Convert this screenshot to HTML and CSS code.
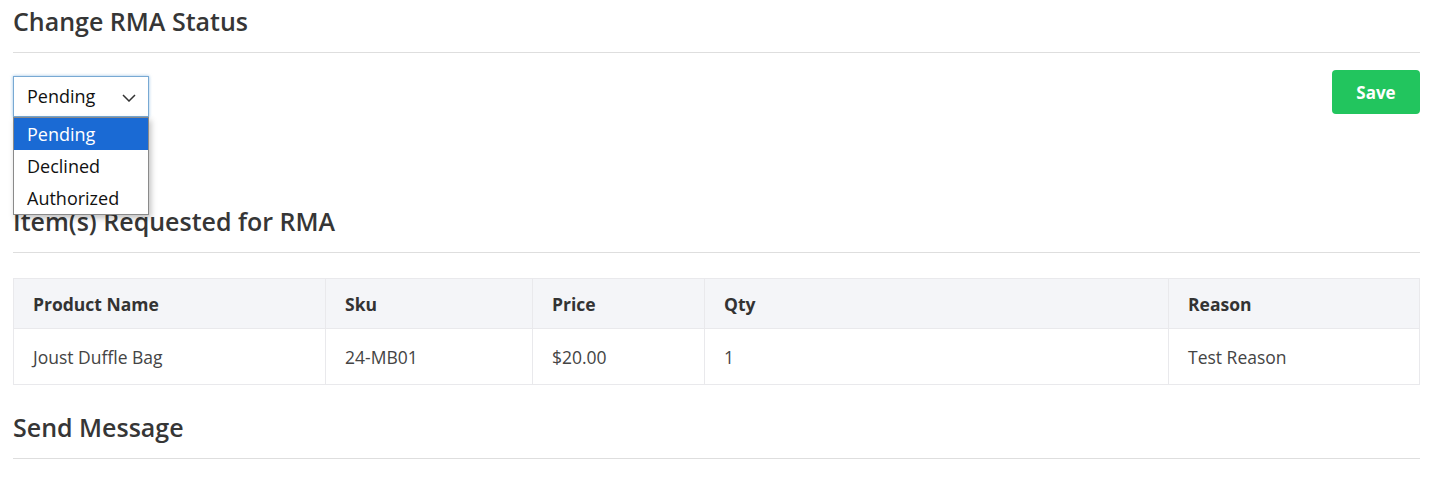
FILE: index.html
```html
<!DOCTYPE html>
<html lang="en">
<head>
    <meta charset="UTF-8">
    <meta name="viewport" content="width=device-width, initial-scale=1.0">
    <title>RMA Details</title>
    <link rel="stylesheet" href="styles.css">
</head>
<body>
    <div class="page">
        <h2 class="section-title">Change RMA Status</h2>

        <div class="status-row">
            <div class="status-select">
                <div class="select-box">
                    <span>Pending</span>
                    <svg class="chevron" width="14" height="8" viewBox="0 0 14 8">
                        <path d="M1 1 L7 7 L13 1" fill="none" stroke="#333" stroke-width="1.5"/>
                    </svg>
                </div>
                <ul class="select-options">
                    <li class="selected">Pending</li>
                    <li>Declined</li>
                    <li>Authorized</li>
                </ul>
            </div>
            <button class="save-btn">Save</button>
        </div>

        <h2 class="section-title items-title">Item(s) Requested for RMA</h2>

        <table class="items-table">
            <colgroup>
                <col style="width: 312px">
                <col style="width: 207px">
                <col style="width: 172px">
                <col style="width: 464px">
                <col>
            </colgroup>
            <thead>
                <tr>
                    <th>Product Name</th>
                    <th>Sku</th>
                    <th>Price</th>
                    <th>Qty</th>
                    <th>Reason</th>
                </tr>
            </thead>
            <tbody>
                <tr>
                    <td>Joust Duffle Bag</td>
                    <td>24-MB01</td>
                    <td>$20.00</td>
                    <td>1</td>
                    <td>Test Reason</td>
                </tr>
            </tbody>
        </table>

        <h2 class="section-title message-title">Send Message</h2>
    </div>
</body>
</html>
```

FILE: styles.css
```css
body {
    margin: 0;
    font-family: "Open Sans", "Noto Sans", sans-serif;
    color: #333;
    background: #fff;
}

.page {
    padding: 6px 10px 0 13px;
}

.section-title {
    margin: 0;
    font-size: 25px;
    font-weight: 600;
    line-height: 30px;
    padding-bottom: 16px;
    border-bottom: 1px solid #dedede;
    color: #363636;
}

/* status row */
.status-row {
    display: flex;
    justify-content: space-between;
    align-items: flex-start;
    margin-top: 17px;
}

.status-select {
    position: relative;
    margin-top: 6px;
}

.select-box {
    display: flex;
    align-items: center;
    justify-content: space-between;
    box-sizing: border-box;
    width: 136px;
    height: 41px;
    padding: 0 12px 0 13px;
    border: 1px solid #78a9d3;
    box-shadow: 0 0 3px rgba(80, 150, 210, 0.6);
    font-size: 18px;
    color: #111;
}

.select-box span {
    margin-top: -2px;
}

.chevron {
    margin-top: 3px;
}

.select-options {
    position: absolute;
    top: 41px;
    left: 0;
    width: 136px;
    box-sizing: border-box;
    margin: 0;
    padding: 0;
    list-style: none;
    background: #fff;
    border: 1px solid #8a8a8a;
    box-shadow: 2px 3px 6px rgba(0, 0, 0, 0.25);
    font-size: 18px;
    color: #111;
    z-index: 2;
}

.select-options li {
    height: 32px;
    line-height: 32px;
    padding-left: 13px;
}

.select-options li.selected {
    background: #1a6ad4;
    color: #fff;
}

.save-btn {
    width: 88px;
    height: 44px;
    border: none;
    border-radius: 4px;
    background: #22c55e;
    color: #fff;
    font-family: inherit;
    font-size: 17px;
    font-weight: 700;
    cursor: pointer;
}

.items-title {
    margin-top: 89px;
}

/* table */
.items-table {
    width: 100%;
    margin-top: 25px;
    border-collapse: collapse;
    table-layout: fixed;
    border: 1px solid #e9e9ec;
    font-size: 17.5px;
}

.items-table th,
.items-table td {
    text-align: left;
    line-height: 24px;
    padding: 0 19px;
    border: 1px solid #e9e9ec;
}

.items-table th {
    height: 49px;
    background: #f4f5f8;
    font-weight: 700;
    color: #333;
}

.items-table td {
    height: 55px;
    color: #444;
}

.message-title {
    margin-top: 27px;
}
```
